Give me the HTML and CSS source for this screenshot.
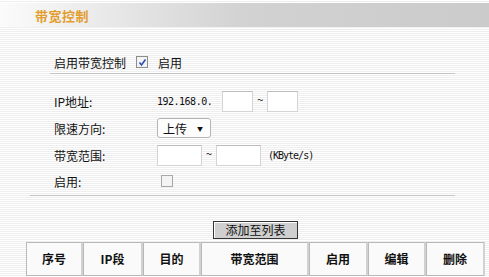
FILE: index.html
```html
<!doctype html>
<html>
    <head>
        <title>带宽控制</title>
        <link rel="stylesheet" href="styles.css">
    </head>
    <body>
        <header class="title-bar">
            <h1>带宽控制</h1>
        </header>

        <div class="section switch-section">
            <div class="switch-row">
                <span class="label">启用带宽控制</span>
                <span class="checkbox checked">
                    <svg width="9" height="9" viewBox="0 0 9 9"><path d="M1.5 4.5 L3.5 7 L7.5 1.5" fill="none" stroke="#2a4fb0" stroke-width="1.6"/></svg>
                </span>
                <span class="check-text">启用</span>
            </div>
        </div>

        <div class="section rule-section">
            <div class="form-grid">
                <span class="label">IP地址:</span>
                <div class="field">
                    <span class="ip-prefix">192.168.0.</span>
                    <span class="text-box short"></span>
                    <span class="tilde">~</span>
                    <span class="text-box short"></span>
                </div>

                <span class="label">限速方向:</span>
                <div class="field">
                    <span class="select-box">上传<span class="arrow">▼</span></span>
                </div>

                <span class="label">带宽范围:</span>
                <div class="field">
                    <span class="text-box wide"></span>
                    <span class="tilde">~</span>
                    <span class="text-box wide"></span>
                    <span class="unit">(KByte/s)</span>
                </div>

                <span class="label">启用:</span>
                <div class="field">
                    <span class="checkbox plain"></span>
                </div>
            </div>
        </div>

        <div class="list-area">
            <div class="button-row">
                <button class="add-button">添加至列表</button>
            </div>
            <table class="rule-table">
                <tr>
                    <th class="col-no">序号</th>
                    <th class="col-ip">IP段</th>
                    <th class="col-dir">目的</th>
                    <th class="col-range">带宽范围</th>
                    <th class="col-on">启用</th>
                    <th class="col-edit">编辑</th>
                    <th class="col-del">删除</th>
                </tr>
            </table>
        </div>
    </body>
</html>
```

FILE: styles.css
```css
body {
    margin: 0;
    font-family: "Noto Sans CJK SC", "DejaVu Sans", sans-serif;
    font-size: 12px;
    color: #111;
    background: repeating-linear-gradient(to bottom, #ffffff 0, #ffffff 1px, #eeeeee 1px, #eeeeee 2px);
    overflow: hidden;
}

.title-bar {
    margin-top: 3px;
    height: 24px;
    display: flex;
    align-items: center;
    padding-left: 35px;
    background: linear-gradient(to right, #fbfbfb 0%, #e6e6e6 25%, #d2d2d2 50%, #cbcbcb 100%);
    border-bottom: 1px solid #f0f0f0;
}

.title-bar h1 {
    margin: 0;
    font-size: 13px;
    font-weight: bold;
    color: #e39d2f;
    letter-spacing: 0.5px;
}

.section {
    margin-right: 34px;
}

.switch-section {
    margin-top: 23px;
    margin-left: 50px;
    padding-left: 4px;
    border-bottom: 1px solid #c4c4c4;
}

.switch-row {
    height: 22px;
    display: flex;
    align-items: center;
}

.switch-row .label {
    margin-right: 10px;
}

.check-text {
    margin-left: 10px;
}

.checkbox {
    width: 12px;
    height: 12px;
    box-sizing: border-box;
    border: 1px solid #8c8c8c;
    background: #f4f4f4;
    display: inline-flex;
    align-items: center;
    justify-content: center;
}

.checkbox.plain {
    margin-left: 4px;
    border-color: #a8a8a8;
}

.rule-section {
    margin-left: 30px;
    padding: 15px 0 3px 24px;
    border-bottom: 1px solid #c4c4c4;
}

.form-grid {
    display: grid;
    grid-template-columns: 103px 1fr;
    grid-template-rows: 24px 24px 24px 22px;
    row-gap: 3px;
    align-items: center;
}

.field {
    display: flex;
    align-items: center;
}

.ip-prefix {
    font-family: "DejaVu Sans Mono", monospace;
    font-size: 10px;
    letter-spacing: -0.5px;
    margin-right: 10px;
}

.text-box {
    height: 21px;
    box-sizing: border-box;
    background: #ffffff;
    border: 1px solid #d4d4d4;
    border-top-color: #bdbdbd;
}

.text-box.short {
    width: 31px;
}

.text-box.wide {
    width: 45px;
}

.tilde {
    width: 14px;
    text-align: center;
    font-size: 11px;
    align-self: flex-start;
}

.unit {
    margin-left: 7px;
    font-family: "DejaVu Sans Mono", monospace;
    font-size: 10px;
    letter-spacing: -1px;
}

.select-box {
    width: 54px;
    height: 20px;
    box-sizing: border-box;
    border: 1px solid #b4b4b4;
    border-radius: 3px;
    background: #fdfdfd;
    display: flex;
    align-items: center;
    justify-content: space-between;
    padding: 0 7px 0 5px;
}

.select-box .arrow {
    font-size: 6px;
}

.list-area {
    margin-left: 26px;
    width: 459px;
}

.button-row {
    display: flex;
    justify-content: center;
    margin-top: 25px;
}

.add-button {
    width: 85px;
    height: 18px;
    padding: 0;
    font-family: "Noto Sans CJK SC", sans-serif;
    font-size: 12px;
    line-height: 14px;
    color: #111;
    background: #cfcfcf;
    border: 1px solid #333333;
    box-shadow: inset 1px 1px 0 #ffffff;
}

.rule-table {
    margin-top: 3px;
    width: 459px;
    border-collapse: separate;
    border-spacing: 0;
    table-layout: fixed;
}

.rule-table th {
    box-sizing: border-box;
    height: 34px;
    padding: 0 0 2px 0;
    font-size: 12px;
    font-weight: bold;
    background: #fafafa;
    border: 1px solid #b8b8b8;
    border-right-width: 2px;
    border-right-color: #d2d2d2;
    text-align: center;
}

.col-no { width: 57px; }
.col-ip { width: 60px; }
.col-dir { width: 58px; }
.col-range { width: 108px; }
.col-on { width: 59px; }
.col-edit { width: 58px; }
.col-del { width: 59px; }
```
